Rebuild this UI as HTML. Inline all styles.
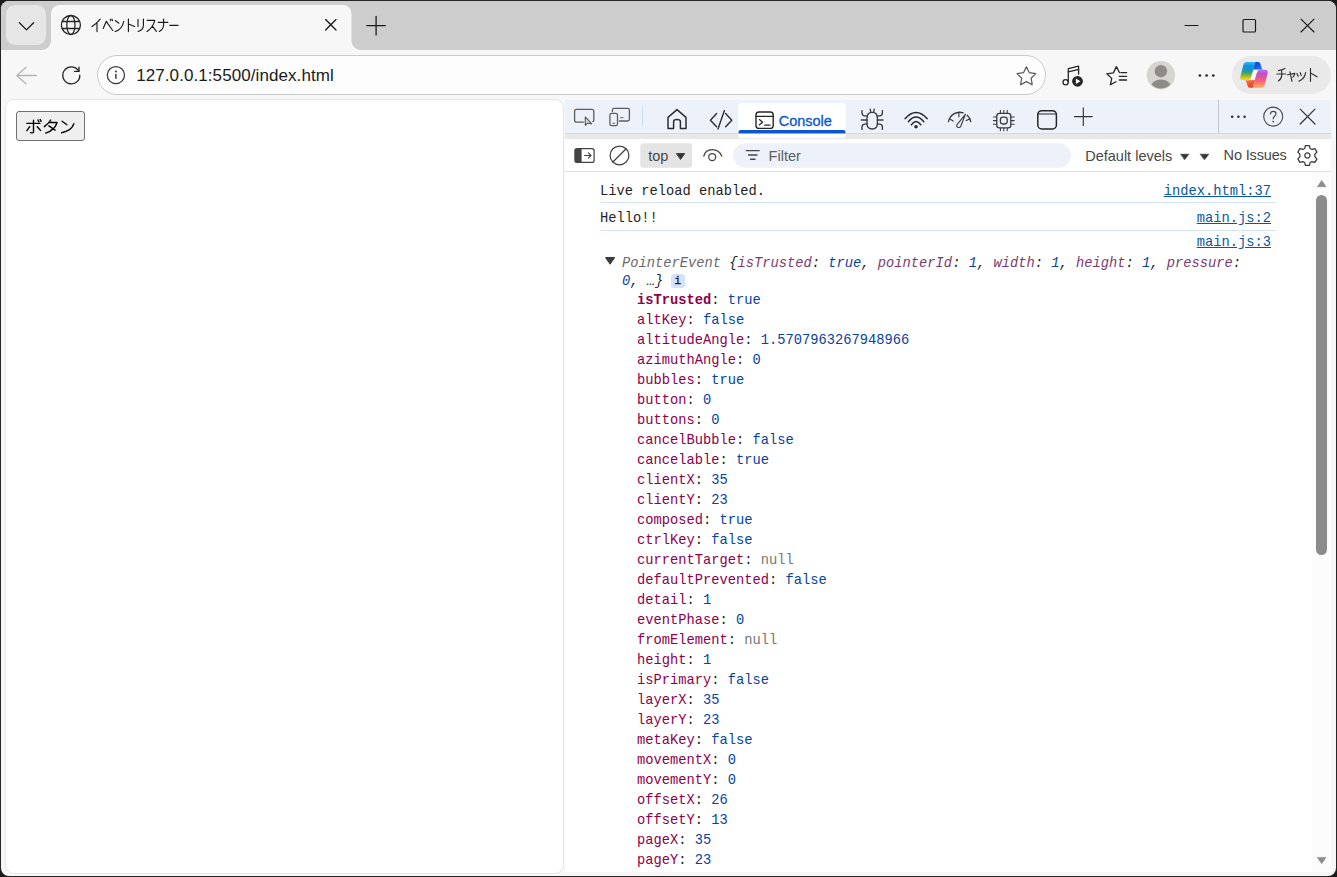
<!DOCTYPE html>
<html lang="ja">
<head>
<meta charset="utf-8">
<title>Event listener</title>
<style>
*{box-sizing:border-box;margin:0;padding:0}
html,body{width:1337px;height:877px;overflow:hidden;background:#1a1a1a;font-family:"Liberation Sans",sans-serif;}
.abs,#win *{position:absolute}
#win{position:absolute;left:0;top:0;width:1337px;height:877px;background:#262626;border-radius:9px;overflow:hidden}
#inner{left:1px;top:1px;width:1335px;height:875px;border-radius:8px;overflow:hidden;background:#f7f7f7}
/* coordinates inside #inner are offset by -1; use wrapper to restore page coords */
#c{left:-1px;top:-1px;width:1337px;height:877px}
#titlebar{left:0;top:0;width:1337px;height:50px;background:#cdcdcd}
#tabdd{left:6px;top:5px;width:40px;height:40px;border-radius:9px;background:#e6e6e6}
#tab{left:51px;top:5px;width:301px;height:45px;background:#f7f7f7;border-radius:9px 9px 0 0}
.tabcurve{width:9px;height:9px;top:41px}
#toolbar{left:0;top:50px;width:1337px;height:50px;background:#f7f7f7}
#addr{left:97px;top:55px;width:949px;height:40px;border-radius:20px;background:#fdfdfd;border:1px solid #c9c9c9}
#url{left:136.2px;top:65px;font-size:17px;letter-spacing:0.08px;line-height:22px;color:#1b1b1b;white-space:nowrap}
#chat{left:1232px;top:56px;width:99px;height:38px;border-radius:19px;background:#e9e9e9}
#page{left:5px;top:99px;width:559px;height:775px;background:#fff;border:1px solid #e6e6e6;border-radius:9px}
#btn{left:16px;top:111px;width:69px;height:30px;background:#efefef;border:1px solid #6f6f6f;border-radius:3px}
#dt{left:565px;top:100px;width:766px;height:772px;background:#fff}
#dttabs{left:0;top:0;width:766px;height:33px;background:#edf2fa}
#dtline1{left:0;top:33px;width:766px;height:1px;background:#c7dbf9}
#dtband{left:0;top:34px;width:766px;height:5px;background:#e8e8e8}
#dtbar{left:0;top:39px;width:766px;height:32px;background:#fff}
#dtline2{left:0;top:71px;width:766px;height:1px;background:#d3e3fd}
.ui{font-size:14.5px;line-height:20px;color:#474747;white-space:nowrap}
.mono{font-family:"Liberation Mono",monospace;font-size:13.75px;line-height:20px;white-space:pre;color:#1f1f1f}
#con{left:0;top:0;width:1337px;height:877px}
.row{left:637px}
.sep{left:600px;width:676px;height:1px;background:#d3e3fd}
.lnk{color:#06589f;text-decoration:underline}
.k{color:#8e004b;position:static!important}
.b{font-weight:bold}
.n{color:#0842a0;position:static!important}
.z{color:#757575;position:static!important}
.d{color:#6a6a6a;position:static!important}
.pk{color:#7d3a6e;position:static!important}
.it{font-style:italic}
#ibadge{width:13.6px;height:13.6px;border-radius:3.5px;background:#d3e3fd}
#sbtrack{left:1312px;top:172px;width:19px;height:700px;background:#fcfcfc}
#sbthumb{left:1316px;top:195px;width:11px;height:360px;border-radius:6px;background:#8b8b8b}
</style>
</head>
<body>
<div id="win"><div id="inner"><div id="c">
  <div id="titlebar"></div>
  <div id="tabdd"></div>
  <div id="toolbar"></div>
  <div id="addr"></div>
  <div id="url">127.0.0.1:5500/index.html</div>
  <div id="chat"></div>
  <div id="page"></div>
  <div id="btn"></div>
  <div id="dt">
    <div id="dttabs"></div>
    <div id="dtline1"></div>
    <div id="dtband"></div>
    <div id="dtbar"></div>
    <div id="dtline2"></div>
  </div>
  <svg id="ico" style="left:0;top:0" width="1337" height="877" viewBox="0 0 1337 877" fill="none" stroke-linecap="round" stroke-linejoin="round">
    <!-- active tab shape -->
    <path d="M42 50 A9 9 0 0 0 51 41 V13.5 A8.5 8.5 0 0 1 59.5 5 H343 A8.5 8.5 0 0 1 351.5 13.5 V41 A9 9 0 0 0 360.5 50 Z" fill="#f7f7f7" stroke="none"/>
    <!-- tab dropdown chevron -->
    <path d="M19.4 22.8 L26.5 29.9 L33.6 22.8" stroke="#1a1a1a" stroke-width="1.3"/>
    <!-- globe favicon -->
    <g stroke="#262626" stroke-width="1.3">
      <circle cx="70.9" cy="25" r="9.5"/>
      <ellipse cx="70.9" cy="25" rx="4.1" ry="9.5"/>
      <path d="M62.3 21.5 H79.5 M62.3 28.5 H79.5"/>
    </g>
    <!-- tab title (katakana strokes) -->
    <g id="ttl" stroke="#1c1c1c" stroke-width="1.15">
      <path d="M100.3 19.2 Q96.5 23.6 92 26.6 M97 23.3 V31.6"/>
      <path d="M103.2 28.4 L106.3 21.3 L112.7 30.5 M110.3 19.3 L110.8 20.8 M112 19.1 L112.6 20.6"/>
      <path d="M115.3 20.5 L118.9 23.2 M123.7 21.3 Q122.3 29.3 115.1 31.5"/>
      <path d="M128.4 19.1 V31.6 M128.4 24 L134.7 26.5"/>
      <path d="M138 19.3 V26.4 M143.4 19.1 V25.3 Q143.4 30 138.2 31.5"/>
      <path d="M147.2 20.4 H154.8 Q152.8 27.8 147 31.5 M152.4 26.2 L156.3 31.4"/>
      <path d="M158.2 22.4 H167.9 M163.6 19.1 V24.8 Q163.4 29.4 159.3 31.5"/>
      <path d="M169.8 25.4 H178"/>
    </g>
    <!-- tab close -->
    <path d="M325.6 19.6 L336 30 M336 19.6 L325.6 30" stroke="#1a1a1a" stroke-width="1.35"/>
    <!-- new tab -->
    <path d="M366.8 25.6 H385.4 M376.1 16.3 V34.9" stroke="#1a1a1a" stroke-width="1.3"/>
    <!-- window controls -->
    <path d="M1185 25.5 H1198" stroke="#1a1a1a" stroke-width="1.1"/>
    <rect x="1243" y="19.5" width="12.5" height="12.5" rx="1" stroke="#1a1a1a" stroke-width="1.2"/>
    <path d="M1301 19.2 L1314 32 M1314 19.2 L1301 32" stroke="#1a1a1a" stroke-width="1.15"/>
    <!-- back -->
    <path d="M36.2 75.5 H16.8 M26 67.3 L16.8 75.5 L26 83.8" stroke="#b4b4b4" stroke-width="1.3"/>
    <!-- reload -->
    <path d="M79.8 75.2 A8.5 8.5 0 1 1 78.7 71.2" stroke="#262626" stroke-width="1.35"/>
    <path d="M79 67.2 V71.4 H74.6" stroke="#262626" stroke-width="1.35"/>
    <!-- site info -->
    <circle cx="115.9" cy="75.1" r="8.6" stroke="#3a3a3a" stroke-width="1.25"/>
    <path d="M115.9 74 V78.8" stroke="#3a3a3a" stroke-width="1.5" stroke-linecap="butt"/>
    <circle cx="115.9" cy="71.4" r="1" fill="#3a3a3a" stroke="none"/>
    <!-- favorite star -->
    <path d="M1026.4 66.8 L1029.3 72.7 L1035.8 73.6 L1031.1 78.2 L1032.2 84.7 L1026.4 81.6 L1020.6 84.7 L1021.7 78.2 L1017.0 73.6 L1023.5 72.7 Z" stroke="#5a5a5a" stroke-width="1.2"/>
    <!-- media (music) -->
    <g stroke="#262626" stroke-width="1.3">
      <path d="M1068.3 81.5 V68.6 L1078.6 66.1 V74"/>
      <path d="M1068.3 71.8 L1078.6 69.3"/>
      <circle cx="1065.6" cy="82.3" r="2.6"/>
    </g>
    <circle cx="1077.5" cy="81.3" r="5.4" fill="#262626" stroke="none"/>
    <path d="M1075.9 78.6 L1080.4 81.3 L1075.9 84 Z" fill="#fff" stroke="none"/>
    <!-- favorites list -->
    <g stroke="#262626" stroke-width="1.3">
      <path d="M1119.4 72.5 L1116.4 66.6 L1113.4 72.9 L1106.8 73.8 L1111.7 78.4 L1110.4 84.8 L1116 81.8"/>
      <path d="M1120.8 72.6 H1126.6 M1119.4 76.3 H1126.6 M1119.4 80 H1126.6"/>
    </g>
    <!-- avatar -->
    <circle cx="1160.9" cy="75.2" r="14.2" fill="#d8d5d1" stroke="none"/>
    <circle cx="1160.9" cy="71.2" r="6.2" fill="#8e8a86" stroke="none"/>
    <clipPath id="avc"><circle cx="1160.9" cy="75.2" r="13.2"/></clipPath>
    <ellipse cx="1160.9" cy="87.2" rx="10.2" ry="7.8" fill="#8e8a86" stroke="none" clip-path="url(#avc)"/>
    <!-- settings and more -->
    <g fill="#262626" stroke="none"><circle cx="1199.9" cy="75.5" r="1.35"/><circle cx="1206.6" cy="75.5" r="1.35"/><circle cx="1213.3" cy="75.5" r="1.35"/></g>
    <!-- ===== page button label (katakana strokes) ===== -->
    <g stroke="#000" stroke-width="1.4">
      <path d="M26.9 123.4 H39.9 M33.5 120.3 V132.2 Q33.4 133.3 30.6 132.6 M29.7 126.7 L26.9 130.7 M37.3 126.7 L40.5 130.4 M38 120 L38.9 121.8 M40.2 119.5 L41.1 121.4"/>
      <path d="M50.7 120 Q48.2 124 44.3 126.7 M48.9 122.5 H57 Q55 130 45.9 133 M48.9 125.8 L55.1 130.1"/>
      <path d="M62.1 121.2 L66.9 124.7 M73.9 123.8 Q71.5 131 61.6 132.7"/>
    </g>
    <!-- ===== Copilot chat pill ===== -->
    <defs>
      <linearGradient id="cg1" x1="0" y1="0" x2="0" y2="1"><stop offset="0" stop-color="#28bdfc"/><stop offset="0.2" stop-color="#158fe8"/><stop offset="0.48" stop-color="#1a97b6"/><stop offset="0.63" stop-color="#46aa5c"/><stop offset="0.81" stop-color="#b4be20"/><stop offset="0.96" stop-color="#fbd302"/></linearGradient>
      <linearGradient id="cg2" x1="0" y1="0" x2="0" y2="1"><stop offset="0" stop-color="#c070fa"/><stop offset="0.2" stop-color="#b652cc"/><stop offset="0.45" stop-color="#ea5096"/><stop offset="0.66" stop-color="#f46684"/><stop offset="0.86" stop-color="#fa965a"/><stop offset="1" stop-color="#ffb050"/></linearGradient>
      <linearGradient id="cg3" x1="0" y1="0" x2="0.6" y2="1"><stop offset="0" stop-color="#1238cc"/><stop offset="1" stop-color="#1a74e6"/></linearGradient>
      <linearGradient id="cg4" x1="0" y1="0" x2="0.5" y2="1"><stop offset="0" stop-color="#ff7c36"/><stop offset="1" stop-color="#e6402c"/></linearGradient>
    </defs>
    <g stroke="none">
      <path d="M1255.2 62.1 H1258.2 Q1260 62.1 1260.6 64.4 L1261.4 67.2 Q1261.8 68.9 1263.2 69.4 L1253 69.8 Z" fill="url(#cg3)"/>
      <path d="M1252.8 87.7 H1249.8 Q1248 87.7 1247.4 85.4 L1246.6 82.6 Q1246.2 80.9 1244.8 80.4 L1255 80 Z" fill="url(#cg4)"/>
      <path d="M1254.2 69.8 L1257.2 69.8 L1254.7 79.9 L1250.2 80 Z" fill="#f5f5f5"/>
      <path d="M1246.4 62.1 H1255.4 L1253.4 69.2 L1251.3 76.2 Q1250.4 80.1 1247.6 80.1 H1242.6 Q1239.6 80.1 1240.4 76.4 L1243.2 65.4 Q1244 62.1 1246.4 62.1 Z" fill="url(#cg1)"/>
      <path d="M1261.6 87.7 H1252.6 L1254.6 80.6 L1256.7 73.6 Q1257.6 69.7 1260.4 69.7 H1265.4 Q1268.4 69.7 1267.6 73.4 L1264.8 84.4 Q1264 87.7 1261.6 87.7 Z" fill="url(#cg2)"/>
    </g>
    <g stroke="#2e2e2e" stroke-width="1.15">
      <path d="M1285 68.6 Q1282 70 1278.4 70.6 M1276.9 74 H1285.8 M1281.7 70.2 V75.6 Q1281.5 79 1278.4 80.9"/>
      <path d="M1287.6 74.8 L1294.9 73.4 Q1294.4 75.6 1292.8 77.2 M1289.9 71.8 L1292 81.3"/>
      <path d="M1296.9 73.4 L1298.2 76.3 M1300.2 72.6 L1301.2 75.5 M1305.6 72.6 Q1304.8 78.6 1299 81.1"/>
      <path d="M1310.5 68.5 V81.3 M1310.5 73 L1317.1 76.7"/>
    </g>
    <!-- ===== DevTools tab bar ===== -->
    <!-- console tab bg + underline -->
    <rect x="738" y="103" width="108" height="35" rx="4" fill="#fff" stroke="none"/>
    <path d="M738.5 133.6 V132 Q738.5 130 740.5 130 H843.5 Q845.5 130 845.5 132 V133.6 Z" fill="#0b57d0" stroke="none"/>
    <!-- inspect -->
    <g stroke="#5c5c5c" stroke-width="1.3">
      <path d="M583.4 122.2 H576.6 Q574.6 122.2 574.6 120.2 V111.3 Q574.6 109.3 576.6 109.3 H591.8 Q593.8 109.3 593.8 111.3 V120.2 Q593.8 121.2 593 121.6"/>
      <path d="M585.3 116.9 V125.3 L587.7 123 L591.7 123.8 Z" stroke-width="1.2" fill="#dde1e8"/>
    </g>
    <!-- device -->
    <g stroke="#5c5c5c" stroke-width="1.3">
      <path d="M612.4 111.6 V110.2 Q612.4 108.4 614.2 108.4 H627.6 Q629.4 108.4 629.4 110.2 V119.2 Q629.4 121 627.6 121 H619.4"/>
      <rect x="609.9" y="113.3" width="7.6" height="12.4" rx="1.6"/>
      <path d="M620.6 117.8 H623 M612.8 123.2 H614.6" stroke-width="1.1"/>
    </g>
    <path d="M642.5 106 V125.6" stroke="#c9dbf7" stroke-width="1"/>
    <!-- home (welcome) -->
    <path d="M668 128.6 V117.4 L677 109.6 L686 117.4 V128.6 H680.4 V121.4 Q680.4 119.4 677 119.4 Q673.6 119.4 673.6 121.4 V128.6 Z" stroke="#2e2e2e" stroke-width="1.5"/>
    <!-- elements -->
    <path d="M716.6 113.6 L710.4 120.2 L716.6 126.8 M725.6 113.6 L731.8 120.2 L725.6 126.8 M724.4 110.6 L718 129" stroke="#2e2e2e" stroke-width="1.4"/>
    <!-- console icon -->
    <g stroke="#262626" stroke-width="1.4">
      <rect x="756" y="112" width="17.2" height="16.4" rx="3"/>
      <path d="M756 116.4 H773.2" stroke-width="1.2"/>
      <path d="M759.4 119.6 L762.6 122.2 L759.4 124.8 M764.6 125 H770" stroke-width="1.25"/>
    </g>
    <!-- sources (bug) -->
    <g stroke="#3a3a3a" stroke-width="1.35">
      <path d="M867 118.2 Q867 112.4 872.2 112.4 Q877.4 112.4 877.4 118.2 V123.6 Q877.4 129 872.2 129 Q867 129 867 123.6 Z"/>
      <path d="M861.4 120 H867 M877.4 120 H883 M870.2 109.2 L870.8 112.4 M874.2 109.2 L873.6 112.4"/>
      <path d="M862 110.6 V113 Q862 115.4 864.4 115.8 L867 116.2 M882.4 110.6 V113 Q882.4 115.4 880 115.8 L877.4 116.2"/>
      <path d="M862 129.4 V127 Q862 124.6 864.4 124.2 L867 123.8 M882.4 129.4 V127 Q882.4 124.6 880 124.2 L877.4 123.8"/>
    </g>
    <!-- network (wifi) -->
    <g stroke="#262626" stroke-width="1.5">
      <path d="M905.2 118.6 Q916 106.2 927.1 118.6"/>
      <path d="M908.4 121.7 Q916 112.3 923.8 121.7"/>
      <path d="M911.4 124.8 Q916 118.2 920.8 124.8"/>
    </g>
    <circle cx="916" cy="126.8" r="1.75" fill="#262626" stroke="none"/>
    <!-- performance gauge -->
    <g stroke="#3a3a3a" stroke-width="1.3">
      <path d="M948.5 121.6 A11.3 11.3 0 0 1 963.2 112.9"/>
      <path d="M967.2 115.3 A11.3 11.3 0 0 1 970.8 121.6"/>
      <path d="M958.9 113 V116.8 M949.8 119 L953.2 120.9 M969.6 119 L966.2 120.5" stroke-width="1.15"/>
      <path d="M965.4 114.3 L957.2 124.4 Q956 126.4 957.8 127.3 Q959.8 128.1 960.8 126.2 Z" stroke-width="1.1"/>
    </g>
    <!-- memory (chip) -->
    <g stroke="#3a3a3a" stroke-width="1.3">
      <rect x="996.8" y="113.3" width="14" height="14.6" rx="2.6"/>
      <rect x="1000.4" y="117.2" width="6.8" height="6.8" rx="2.4"/>
      <path d="M1000.4 110.4 V113 M1003.8 110.4 V113 M1007.2 110.4 V113 M1000.4 128.2 V130.8 M1003.8 128.2 V130.8 M1007.2 128.2 V130.8" stroke-width="1.1"/>
      <path d="M993.4 117 H996.4 M993.4 120.6 H996.4 M993.4 124.2 H996.4 M1011.2 117 H1014.2 M1011.2 120.6 H1014.2 M1011.2 124.2 H1014.2" stroke-width="1.1"/>
    </g>
    <!-- application -->
    <g stroke="#262626" stroke-width="1.5">
      <rect x="1037.8" y="110.7" width="18.6" height="18.2" rx="4"/>
      <path d="M1038 114 H1056.2" stroke-width="1.2"/>
    </g>
    <!-- add tab -->
    <path d="M1074.4 116.6 H1092.2 M1083.3 107.7 V125.5" stroke="#333" stroke-width="1.15"/>
    <!-- right group -->
    <path d="M1218.5 100 V132.6" stroke="#c3c6cc" stroke-width="1"/>
    <g fill="#333" stroke="none"><circle cx="1232.2" cy="116.7" r="1.3"/><circle cx="1238.4" cy="116.7" r="1.3"/><circle cx="1244.6" cy="116.7" r="1.3"/></g>
    <circle cx="1273.2" cy="116.6" r="9.5" stroke="#444" stroke-width="1.1"/>
    <path d="M1270.4 113.9 Q1270.6 111.4 1273.2 111.4 Q1276 111.4 1276 113.8 Q1276 115.2 1274.6 116.2 Q1273.2 117.2 1273.2 118.8" stroke="#444" stroke-width="1.15"/>
    <circle cx="1273.2" cy="121.6" r="0.9" fill="#444" stroke="none"/>
    <path d="M1300.2 109.2 L1315 124 M1315 109.2 L1300.2 124" stroke="#333" stroke-width="1.2"/>
    <!-- ===== console toolbar ===== -->
    <rect x="640.3" y="143.2" width="51.7" height="24.5" rx="3" fill="#e4e4e4" stroke="none"/>
    <rect x="733.2" y="143.2" width="337.8" height="24.5" rx="12.2" fill="#edf2fa" stroke="none"/>
    <!-- sidebar toggle -->
    <rect x="574.9" y="148.6" width="19.2" height="13.8" rx="2.2" stroke="#444" stroke-width="1.25"/>
    <path d="M575 150.4 Q575 148.6 577 148.6 H581.6 V162.4 H577 Q575 162.4 575 160.6 Z" fill="#444" stroke="none"/>
    <path d="M584.6 155.5 H590.8 M588.4 152.9 L591 155.5 L588.4 158.1" stroke="#444" stroke-width="1.15"/>
    <!-- clear -->
    <circle cx="619.5" cy="155.4" r="9.4" stroke="#444" stroke-width="1.25"/>
    <path d="M612.9 162 L626.1 148.8" stroke="#444" stroke-width="1.25"/>
    <!-- top caret -->
    <path d="M676.7 153.6 H684.7 L680.7 159.2 Z" fill="#333" stroke="#333" stroke-width="0.9"/>
    <!-- eye -->
    <path d="M703.8 156.2 Q705.4 149.6 712.2 149.6 Q719.2 149.6 721.8 156.2" stroke="#444" stroke-width="1.3"/>
    <circle cx="712.2" cy="157" r="3.5" stroke="#444" stroke-width="1.25"/>
    <!-- filter icon -->
    <path d="M746.4 150.6 H759.2 M748.6 155 H757 M750.6 159.3 H755" stroke="#444" stroke-width="1.45"/>
    <!-- level carets -->
    <path d="M1180.8 154.2 H1188.8 L1184.8 159.6 Z" fill="#333" stroke="#333" stroke-width="0.6"/>
    <path d="M1200.4 154.2 H1208.8 L1204.6 159.6 Z" fill="#333" stroke="#333" stroke-width="0.6"/>
    <!-- gear -->
    <g transform="translate(1307.4 155.5) scale(1.04)" stroke="#3a3a3a" stroke-width="1.2">
      <path d="M-1.9 -9.6 H1.9 L2.6 -6.8 L4.4 -5.8 L7.2 -6.6 L9.2 -3.2 L7.2 -1.2 V1.2 L9.2 3.2 L7.2 6.6 L4.4 5.8 L2.6 6.8 L1.9 9.6 H-1.9 L-2.6 6.8 L-4.4 5.8 L-7.2 6.6 L-9.2 3.2 L-7.2 1.2 V-1.2 L-9.2 -3.2 L-7.2 -6.6 L-4.4 -5.8 L-2.6 -6.8 Z"/>
      <circle cx="0" cy="0" r="2.5"/>
    </g>
  </svg>
  <div class="ui" id="t_console" style="-webkit-text-stroke:0.3px #0b57d0;left:778.8px;top:110.5px;letter-spacing:-0.05px;color:#0b57d0">Console</div>
  <div class="ui" id="t_top" style="left:648.2px;top:145.5px;color:#474747">top</div>
  <div class="ui" id="t_filter" style="left:768.6px;top:145.5px;color:#5e5e5e">Filter</div>
  <div class="ui" id="t_levels" style="left:1085.2px;top:145.5px;color:#474747">Default levels</div>
  <div class="ui" id="t_issues" style="left:1223.6px;top:144.5px;letter-spacing:-0.15px;color:#474747">No Issues</div>
  <div id="con">
    <div class="mono" style="left:600px;top:182.0px">Live reload enabled.</div>
    <div class="mono lnk" style="right:66px;top:182.0px">index.html:37</div>
    <div class="sep" style="top:202px"></div>
    <div class="mono" style="left:600px;top:208.8px">Hello!!</div>
    <div class="mono lnk" style="right:66px;top:208.8px">main.js:2</div>
    <div class="sep" style="top:230px"></div>
    <div class="mono lnk" style="right:66px;top:233.0px">main.js:3</div>
    <svg id="tri" style="left:605px;top:257px" width="10" height="8" viewBox="0 0 10 8"><path d="M0.7 0.6H9.5L5.1 7Z" fill="#3c3c3c" stroke="#3c3c3c" stroke-width="1.1" stroke-linejoin="round"/></svg>
    <div class="mono it" style="left:622px;top:253.8px"><span class="d">PointerEvent </span>{<span class="pk">isTrusted</span>: <span class="n">true</span>, <span class="pk">pointerId</span>: <span class="n">1</span>, <span class="pk">width</span>: <span class="n">1</span>, <span class="pk">height</span>: <span class="n">1</span>, <span class="pk">pressure</span>:</div>
    <div class="mono it" style="left:622px;top:272.0px"><span class="n">0</span>, &#8230;}</div>
    <div id="ibadge" style="left:671px;top:274px"></div>
    <div class="mono" style="left:674.2px;top:271.4px;font-size:11.5px;-webkit-text-stroke:0.3px #1f1f1f;color:#1f1f1f">i</div>
<div class="mono row" style="top:290.8px"><span class="k b">isTrusted</span>: <span class="n">true</span></div>
<div class="mono row" style="top:310.8px"><span class="k">altKey</span>: <span class="n">false</span></div>
<div class="mono row" style="top:330.8px"><span class="k">altitudeAngle</span>: <span class="n">1.5707963267948966</span></div>
<div class="mono row" style="top:350.8px"><span class="k">azimuthAngle</span>: <span class="n">0</span></div>
<div class="mono row" style="top:370.8px"><span class="k">bubbles</span>: <span class="n">true</span></div>
<div class="mono row" style="top:390.8px"><span class="k">button</span>: <span class="n">0</span></div>
<div class="mono row" style="top:410.8px"><span class="k">buttons</span>: <span class="n">0</span></div>
<div class="mono row" style="top:430.8px"><span class="k">cancelBubble</span>: <span class="n">false</span></div>
<div class="mono row" style="top:450.8px"><span class="k">cancelable</span>: <span class="n">true</span></div>
<div class="mono row" style="top:470.8px"><span class="k">clientX</span>: <span class="n">35</span></div>
<div class="mono row" style="top:490.8px"><span class="k">clientY</span>: <span class="n">23</span></div>
<div class="mono row" style="top:510.8px"><span class="k">composed</span>: <span class="n">true</span></div>
<div class="mono row" style="top:530.8px"><span class="k">ctrlKey</span>: <span class="n">false</span></div>
<div class="mono row" style="top:550.8px"><span class="k">currentTarget</span>: <span class="z">null</span></div>
<div class="mono row" style="top:570.8px"><span class="k">defaultPrevented</span>: <span class="n">false</span></div>
<div class="mono row" style="top:590.8px"><span class="k">detail</span>: <span class="n">1</span></div>
<div class="mono row" style="top:610.8px"><span class="k">eventPhase</span>: <span class="n">0</span></div>
<div class="mono row" style="top:630.8px"><span class="k">fromElement</span>: <span class="z">null</span></div>
<div class="mono row" style="top:650.8px"><span class="k">height</span>: <span class="n">1</span></div>
<div class="mono row" style="top:670.8px"><span class="k">isPrimary</span>: <span class="n">false</span></div>
<div class="mono row" style="top:690.8px"><span class="k">layerX</span>: <span class="n">35</span></div>
<div class="mono row" style="top:710.8px"><span class="k">layerY</span>: <span class="n">23</span></div>
<div class="mono row" style="top:730.8px"><span class="k">metaKey</span>: <span class="n">false</span></div>
<div class="mono row" style="top:750.8px"><span class="k">movementX</span>: <span class="n">0</span></div>
<div class="mono row" style="top:770.8px"><span class="k">movementY</span>: <span class="n">0</span></div>
<div class="mono row" style="top:790.8px"><span class="k">offsetX</span>: <span class="n">26</span></div>
<div class="mono row" style="top:810.8px"><span class="k">offsetY</span>: <span class="n">13</span></div>
<div class="mono row" style="top:830.8px"><span class="k">pageX</span>: <span class="n">35</span></div>
<div class="mono row" style="top:850.8px"><span class="k">pageY</span>: <span class="n">23</span></div>

    <div id="sbtrack"></div>
    <div id="sbthumb"></div>
    <svg style="left:1317px;top:180px" width="10" height="8" viewBox="0 0 10 8"><path d="M0.4 6.7 L4.7 0.4 L9 6.7Z" fill="#8b8b8b" stroke="#8b8b8b" stroke-width="0.6" stroke-linejoin="round"/></svg>
    <svg style="left:1317px;top:856px" width="10" height="9" viewBox="0 0 10 9"><path d="M0.4 1.4 L4.7 7.7 L9 1.4Z" fill="#8b8b8b" stroke="#8b8b8b" stroke-width="0.6" stroke-linejoin="round"/></svg>
  </div>
</div></div></div>
</body>
</html>
